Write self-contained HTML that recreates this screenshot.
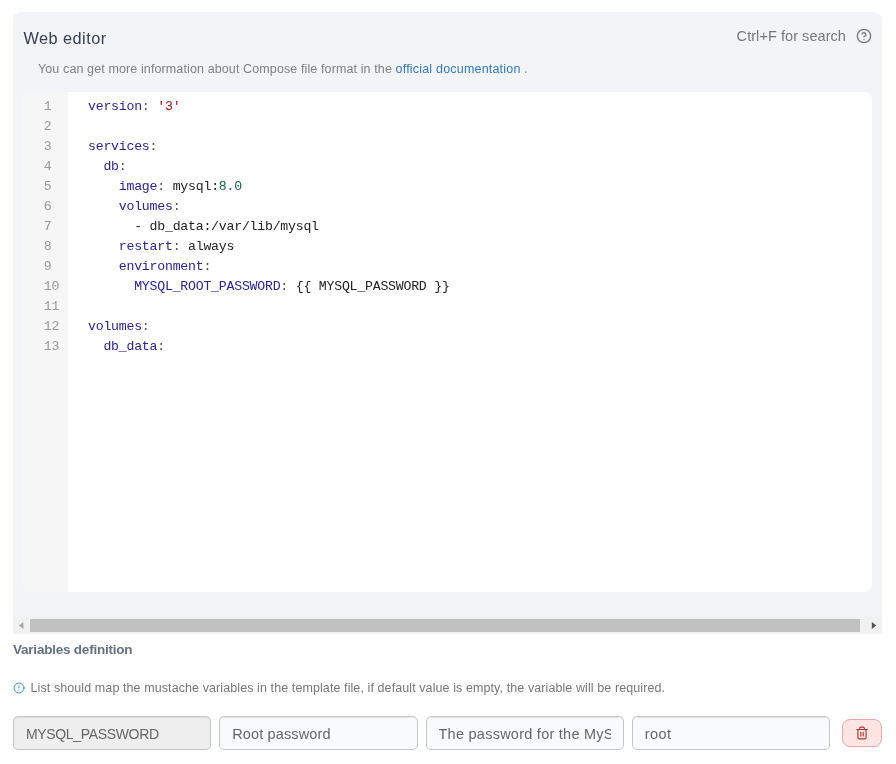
<!DOCTYPE html>
<html lang="en">
<head>
<meta charset="utf-8">
<title>Web editor</title>
<style>
*{box-sizing:border-box;margin:0;padding:0}
html,body{width:896px;height:764px;background:#fff;overflow:hidden}
body{font-family:"Liberation Sans",sans-serif;color:#344054;position:relative}
.aa{will-change:transform}
.panel{position:absolute;left:13px;top:12px;width:869px;height:622px;background:#f2f4f7;border-radius:8px 8px 0 0;overflow:hidden}
.title{position:absolute;left:10.6px;top:16px;font-size:16.3px;line-height:20px;color:#344054;white-space:nowrap;letter-spacing:.45px}
.search{position:absolute;right:36px;top:14px;font-size:14.5px;line-height:20px;color:#777;white-space:nowrap;letter-spacing:.06px}
.help{position:absolute;left:843px;top:16px;width:16px;height:16px}
.info{position:absolute;left:25px;top:49px;font-size:12.5px;line-height:16px;color:#808080;white-space:nowrap;letter-spacing:.115px}
.info a{color:#337ab7;text-decoration:none;letter-spacing:.195px}
.editor{position:absolute;left:10px;top:80px;width:849px;height:500px;background:#fff;border-radius:8px;overflow:hidden}
.gutter{position:absolute;left:0;top:0;width:45px;height:100%;background:#f6f6f7}
.ln,.code{font-family:"Liberation Mono",monospace;font-size:13.2px;letter-spacing:-.22px;line-height:20px;white-space:pre}
.ln{position:absolute;left:20.8px;top:5px;color:#999}
.code{position:absolute;left:65px;top:5px;color:#222}
.k{color:#2a2590}.m{color:#555}.s{color:#a11}.n{color:#164}
.sb{position:absolute;left:0;bottom:0;width:869px;height:17px;background:#f1f1f1}
.thumb{position:absolute;left:17px;top:2px;width:830px;height:13px;background:#c1c1c1}
.arr{position:absolute;top:0;width:17px;height:17px}
h5{position:absolute;left:13px;top:640.6px;font-size:13.5px;line-height:18px;font-weight:bold;color:#667085;white-space:nowrap;letter-spacing:-.22px}
.note{position:absolute;left:30.5px;top:680px;font-size:12.5px;line-height:16px;color:#777;white-space:nowrap;letter-spacing:.092px}
.noteic{position:absolute;left:13px;top:682px;width:12px;height:12px}
.inp{position:absolute;top:716px;height:34px;width:198.25px;border:1px solid #c6c6c6;border-radius:5px;box-shadow:inset 0 1px 1px rgba(0,0,0,.075);background:#f9fafb;font-size:14px;line-height:33px;padding:.75px 12px 0;color:#666;white-space:nowrap;overflow:hidden}
.inp span{display:block;overflow:hidden;white-space:nowrap}
.inp.dis{background:#eee}
.del{position:absolute;left:842px;top:719px;width:40px;height:28px;border:1px solid #e8a9a6;border-radius:8px;background:#fee4e2}
.del svg{position:absolute;left:12px;top:6px;width:14px;height:14px}
</style>
</head>
<body class="aa">
<div class="panel">
  <div class="title">Web editor</div>
  <div class="search">Ctrl+F for search</div>
  <svg class="help" viewBox="0 0 24 24" fill="none" stroke="#777" stroke-width="2" stroke-linecap="round" stroke-linejoin="round"><circle cx="12" cy="12" r="10"/><path d="M9.09 9a3 3 0 0 1 5.83 1c0 2-3 3-3 3"/><path d="M12 17h.01"/></svg>
  <div class="info">You can get more information about Compose file format in the <a>official documentation</a> .</div>
  <div class="editor">
    <div class="gutter"></div>
<pre class="ln">1
2
3
4
5
6
7
8
9
10
11
12
13</pre>
<pre class="code"><span class="k">version</span><span class="m">:</span> <span class="s">'3'</span>

<span class="k">services</span><span class="m">:</span>
  <span class="k">db</span><span class="m">:</span>
    <span class="k">image</span><span class="m">:</span> mysql:<span class="n">8.0</span>
    <span class="k">volumes</span><span class="m">:</span>
      - db_data:/var/lib/mysql
    <span class="k">restart</span><span class="m">:</span> always
    <span class="k">environment</span><span class="m">:</span>
      <span class="k">MYSQL_ROOT_PASSWORD</span><span class="m">:</span> {{ MYSQL_PASSWORD }}

<span class="k">volumes</span><span class="m">:</span>
  <span class="k">db_data</span><span class="m">:</span></pre>
  </div>
  <div class="sb">
    <div class="thumb"></div>
    <svg class="arr" style="left:0" viewBox="0 0 17 17"><path d="M6 8.5 L10.4 5 V12 Z" fill="#a3a3a3"/></svg>
    <svg class="arr" style="right:0" viewBox="0 0 17 17"><path d="M11.3 8.5 L6.8 5 V12 Z" fill="#505050"/></svg>
  </div>
</div>
<h5>Variables definition</h5>
<svg class="noteic" viewBox="0 0 24 24" fill="none" stroke="#3595cf" stroke-width="2" stroke-linecap="round" stroke-linejoin="round"><circle cx="12" cy="12" r="10"/><path d="M12 8v4"/><path d="M12 16h.01"/></svg>
<div class="note">List should map the mustache variables in the template file, if default value is empty, the variable will be required.</div>
<div class="inp dis" style="left:13px;letter-spacing:-.34px"><span>MYSQL_PASSWORD</span></div>
<div class="inp" style="left:219.25px;font-size:14.5px;letter-spacing:.13px"><span>Root password</span></div>
<div class="inp" style="left:425.5px;font-size:14.5px;letter-spacing:.25px"><span>The password for the MySQL</span></div>
<div class="inp" style="left:631.75px;font-size:14.5px;letter-spacing:.42px"><span>root</span></div>
<div class="del"><svg viewBox="0 0 24 24" fill="none" stroke="#b3322b" stroke-width="1.9" stroke-linecap="round" stroke-linejoin="round"><path d="M3 6h18"/><path d="M19 6v14a2 2 0 0 1-2 2H7a2 2 0 0 1-2-2V6"/><path d="M8 6V4a2 2 0 0 1 2-2h4a2 2 0 0 1 2 2v2"/><path d="M10 11v6"/><path d="M14 11v6"/></svg></div>
</body>
</html>
